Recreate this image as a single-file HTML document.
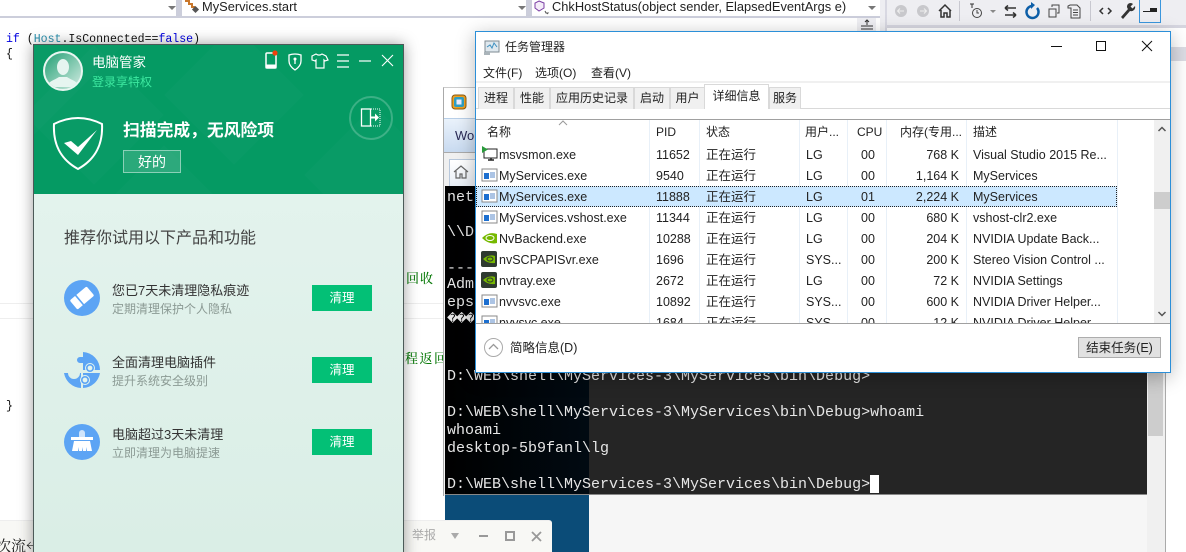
<!DOCTYPE html>
<html><head><meta charset="utf-8">
<style>
*{box-sizing:border-box}
html,body{margin:0;padding:0;width:1186px;height:552px;overflow:hidden;background:#fff}
#w{width:1186px;height:552px;overflow:hidden;position:relative;background:#fff;font-family:"Liberation Sans","Noto Sans CJK SC",sans-serif;font-size:12px;color:#222}
.a{position:absolute;white-space:nowrap}
.mono{font-family:"Liberation Mono","Noto Sans CJK SC",monospace;font-size:11.55px;line-height:14px;color:#111}
.term{font-family:"Liberation Mono",monospace;font-size:15px;line-height:18px;color:#e6e6e6;height:18px}
.green{font-family:"Noto Serif CJK SC",serif;color:#0a7a0a;font-size:13px;line-height:16px;font-weight:500}
.row{position:absolute;left:0;width:640px;height:21px;line-height:20px;font-size:12.5px;color:#222}
.row span{position:absolute;top:1px;white-space:nowrap}
.n{left:23px}.p{left:180px}.s{left:230px}.u{left:330px}.c{left:385px}.m{left:410px;width:73px;text-align:right}.d{left:497px}
.row svg{position:absolute;left:5px;top:2px}
.hd{position:absolute;top:0;font-size:12px;line-height:24px;white-space:nowrap}
.vl{position:absolute;top:0;width:1px;height:203px;background:#e8f0f8}
.tab{position:absolute;top:87px;height:22px;background:#f0f0f0;border:1px solid #d9d9d9;border-bottom:0;text-align:center;line-height:21px;font-size:12px;color:#222}
.btn{position:absolute;left:312px;width:60px;height:26px;background:#03c076;color:#fff;text-align:center;line-height:26px;font-size:12.5px}
.t1{position:absolute;left:112px;font-size:13px;line-height:18px;color:#333;white-space:nowrap}
.t2{position:absolute;left:112px;font-size:12px;line-height:16px;color:#8b9a94;white-space:nowrap}
</style></head><body><div id="w">

<!-- IDE top toolbar -->
<div class="a" style="left:0;top:0;width:887px;height:16px;background:#fff"></div>
<div class="a" style="left:0;top:16px;width:887px;height:2px;background:#ccceDB"></div>
<div class="a" style="left:176px;top:0;width:6px;height:16px;background:#ccceDB"></div>
<div class="a" style="left:526px;top:0;width:6px;height:16px;background:#ccceDB"></div>
<div class="a" style="left:168px;top:6px;width:0;height:0;border:4px solid transparent;border-top:4px solid #777"></div>
<div class="a" style="left:518px;top:6px;width:0;height:0;border:4px solid transparent;border-top:4px solid #777"></div>
<div class="a" style="left:868px;top:6px;width:0;height:0;border:4px solid transparent;border-top:4px solid #777"></div>
<svg class="a" style="left:184px;top:0" width="16" height="14"><path d="M1 1h4v3h3v3h3" stroke="#c9772c" stroke-width="2" fill="none"/><rect x="9" y="7" width="5" height="5" fill="#555" transform="rotate(45 11.5 9.5)"/></svg>
<div class="a" style="left:202px;top:-1px;font-size:12.85px;line-height:16px;color:#222">MyServices.start</div>
<svg class="a" style="left:534px;top:0" width="16" height="15"><path d="M5 1l5 2v5l-5 3-4-3V3z" fill="#f4ecf8" stroke="#7b3fa5"/><path d="M11 11l1 2 2 0-1 1" stroke="#555" fill="none"/></svg>
<div class="a" style="left:552px;top:-1px;font-size:12.85px;line-height:16px;color:#222">ChkHostStatus(object sender, ElapsedEventArgs e)</div>
<div class="a" style="left:0;top:18px;width:887px;height:13px;background:#fff"></div>
<div class="a" style="left:857px;top:18px;width:19px;height:14px;background:#eeeef2"></div>
<svg class="a" style="left:860px;top:19px" width="14" height="13"><path d="M1 7h12M1 10h12M7 1v5M5 3l2-2 2 2" stroke="#333" fill="none"/></svg>

<!-- right toolbar -->
<div class="a" style="left:880px;top:0;width:306px;height:31px;background:#eeeef2"></div>
<div class="a" style="left:885px;top:0;width:2px;height:60px;background:#d8d8e2"></div>
<div class="a" style="left:887px;top:25px;width:299px;height:3px;background:#d6d6e0"></div>
<div class="a" style="left:887px;top:28px;width:299px;height:20px;background:#fff"></div>
<div class="a" style="left:1171px;top:47px;width:15px;height:14px;background:#dcdce4"></div>
<svg class="a" style="left:890px;top:0" width="270" height="24">
<circle cx="11" cy="11" r="6" fill="#c8c8cc"/><path d="M14 11H8M10 8.500l-2.500 2.500 2.500 2.500" stroke="#eee" fill="none"/>
<circle cx="33" cy="11" r="6" fill="#c8c8cc"/><path d="M30 11h6M34 8.500l2.500 2.500-2.500 2.500" stroke="#eee" fill="none"/>
<path d="M49 11l6-6 6 6M51 10v7h3v-4h3v4h3v-7" fill="none" stroke="#333" stroke-width="1.500"/>
<path d="M80 4h4M82 4v4" stroke="#333"/><circle cx="87" cy="13" r="4.500" fill="none" stroke="#444"/><path d="M87 10v3h2" stroke="#444" fill="none"/>
<path d="M100 10h6l-3 3z" fill="#888"/>
<path d="M115 8h11M115 8l3-2.500M115 8l3 2.500M126 15h-11M126 15l-3-2.500M126 15l-3 2.500" stroke="#333" stroke-width="1.500" fill="none"/>
<path d="M142 6a6 6 0 1 0 5 2" stroke="#0e5fa8" stroke-width="2.500" fill="none"/><path d="M141 2v7l4-4z" fill="#0e5fa8"/>
<rect x="159" y="9" width="7" height="8" fill="none" stroke="#444"/><path d="M162 7V5h7v8h-2" fill="none" stroke="#444"/>
<path d="M180 5h7l3 3v10h-9V8h-3v-2z" fill="none" stroke="#444"/><path d="M183 10h5M183 12.500h5M183 15h5" stroke="#444"/>
<path d="M213 8l-3 3 3 3M218 8l3 3-3 3" fill="none" stroke="#333" stroke-width="1.500"/>
<path d="M231 17l7-8a3.500 3.500 0 0 1 5-5l-2.500 2.500 2 2 2.500-2.500a4 4 0 0 1-5 5l-7 8z" fill="#333"/>
</svg>
<div class="a" style="left:959px;top:1px;width:1px;height:20px;background:#c8c8d0"></div>
<div class="a" style="left:1090px;top:1px;width:1px;height:20px;background:#c8c8d0"></div>
<div class="a" style="left:1139px;top:-2px;width:22px;height:25px;border:1px solid #3a96dd"></div>
<div class="a" style="left:1143px;top:11px;width:8px;height:1px;background:#222"></div>
<div class="a" style="left:1150px;top:8px;width:7px;height:4px;background:#222"></div>

<!-- code -->
<div class="a mono" style="left:6px;top:33px"><span style="color:#0000e0">if</span> (<span style="color:#2b91af">Host</span>.IsConnected==<span style="color:#0000e0">false</span>)</div>
<div class="a mono" style="left:6px;top:48px">{</div>
<div class="a mono" style="left:6px;top:400px">}</div>
<div class="a" style="left:0;top:303px;width:444px;height:1px;background:#eee"></div>
<div class="a" style="left:0;top:318px;width:444px;height:1px;background:#eee"></div>
<div class="a green" style="left:406px;top:270px;letter-spacing:1px">回收</div>
<div class="a green" style="left:405px;top:350px;letter-spacing:1.500px">程返回</div>

<!-- console behind -->
<div class="a" style="left:443px;top:87px;width:722px;height:409px;background:#f4f4f4;border-left:1px solid #aaa;border-top:1px solid #ccc"></div>
<div class="a" style="left:444px;top:88px;width:40px;height:30px;background:#fff"></div>
<svg class="a" style="left:451px;top:94px" width="17" height="17"><rect x="1" y="1" width="14" height="14" rx="3" fill="#f0a020" stroke="#8a5a10"/><rect x="3" y="3" width="10" height="10" rx="2" fill="#2f9fc4"/><rect x="5.500" y="5.500" width="5" height="5" fill="#eef"/></svg>
<div class="a" style="left:444px;top:118px;width:40px;height:34px;background:linear-gradient(#eaf2fb,#c8daf0);border-top:1px solid #b8cfe8;font-size:13px;line-height:34px;padding-left:11px;color:#2a2a55">Wo</div>
<div class="a" style="left:444px;top:152px;width:34px;height:34px;background:#f0f0f0;border-top:1px solid #aaa"></div>
<div class="a" style="left:449px;top:159px;width:30px;height:27px;background:linear-gradient(#fff,#e8eef6);border:1px solid #b8c8dc;border-bottom:0"></div>
<svg class="a" style="left:453px;top:164px" width="16" height="16"><path d="M1 8l7-6 7 6M3 7v7h4v-4h2v4h4V7" fill="none" stroke="#666" stroke-width="1.200"/></svg>

<div class="a" style="left:445px;top:186px;width:144px;height:308px;background:linear-gradient(90deg,#000 0,#010a12 100%)"></div>
<div class="a" style="left:589px;top:186px;width:558px;height:308px;background:#252525"></div>
<div class="a" style="left:445px;top:494px;width:702px;height:1px;background:#888"></div>
<div class="a" style="left:445px;top:495px;width:144px;height:57px;background:#0b4c78"></div>
<div class="a" style="left:589px;top:495px;width:558px;height:57px;background:#f6f6f6"></div>
<div class="a" style="left:1147px;top:370px;width:18px;height:182px;background:#f0f0f0"></div>
<div class="a" style="left:1148px;top:370px;width:15px;height:66px;background:#cdcdcd"></div>
<div class="a" style="left:1165px;top:370px;width:1px;height:182px;background:#aaa"></div>

<div class="a term" style="left:447px;top:189px">net</div>
<div class="a term" style="left:447px;top:224px">\\D</div>
<div class="a term" style="left:447px;top:260px">---</div>
<div class="a term" style="left:447px;top:276px">Adm</div>
<div class="a term" style="left:447px;top:294px">eps</div>
<div class="a" style="left:447px;top:312px;width:27px;height:16px;overflow:hidden;font:11px/16px 'Liberation Mono','DejaVu Sans',monospace;color:#e6e6e6"><span style="display:inline-block;width:9px">�</span><span style="display:inline-block;width:9px">�</span><span style="display:inline-block;width:9px">�</span></div>
<div class="a term" style="left:447px;top:368px">D:\WEB\shell\MyServices-3\MyServices\bin\Debug&gt;</div>
<div class="a term" style="left:447px;top:404px">D:\WEB\shell\MyServices-3\MyServices\bin\Debug&gt;whoami</div>
<div class="a term" style="left:447px;top:422px">whoami</div>
<div class="a term" style="left:447px;top:440px">desktop-5b9fanl\lg</div>
<div class="a term" style="left:447px;top:476px">D:\WEB\shell\MyServices-3\MyServices\bin\Debug&gt;</div>
<div class="a" style="left:870px;top:475px;width:9px;height:18px;background:#fff"></div>

<!-- bottom bar -->
<div class="a" style="left:0;top:520px;width:552px;height:32px;background:#f8f8f5;border-top:1px solid #eee;border-radius:0 3px 0 0"></div>
<div class="a" style="left:-4px;top:536px;font-size:15px;line-height:20px;color:#222;font-family:'Noto Serif CJK SC',serif">次流←</div>
<div class="a" style="left:412px;top:527px;font-size:12px;line-height:16px;color:#aaa">举报</div>
<div class="a" style="left:451px;top:533px;width:0;height:0;border:4px solid transparent;border-top:6px solid #aaa"></div>
<div class="a" style="left:479px;top:535px;width:9px;height:2px;background:#999"></div>
<div class="a" style="left:505px;top:531px;width:10px;height:10px;border:2px solid #999"></div>
<svg class="a" style="left:531px;top:531px" width="11" height="11"><path d="M1 1l9 9M10 1l-9 9" stroke="#999" stroke-width="1.800"/></svg>

<!-- QQ manager window -->
<div class="a" style="left:33px;top:44px;width:371px;height:520px;border:1px solid #4c5a58;box-shadow:0 0 14px rgba(0,0,0,.38);background:linear-gradient(#e7f5f0,#daeee6 98%)">
<div style="position:absolute;left:0;top:0;width:369px;height:149px;background:#059a63;overflow:hidden">
<svg width="369" height="149" style="position:absolute;left:0;top:0"><g fill="#fff" fill-opacity=".018"><path d="M0 0h90L0 90z"/><path d="M60 0l70 70-70 70-70-70z"/><path d="M200 -20l70 70-70 70-70-70z"/><path d="M340 60l70 70-70 70-70-70z"/><path d="M130 100l60 60-120 0z"/></g></svg>
</div>
</div>
<!-- avatar -->
<svg class="a" style="left:42px;top:50px" width="42" height="42"><defs><linearGradient id="av" x1="0" y1="0" x2="1" y2="1"><stop offset="0" stop-color="#1f9e72"/><stop offset="1" stop-color="#d8eee6"/></linearGradient><clipPath id="cp"><circle cx="21" cy="21" r="18"/></clipPath></defs><circle cx="21" cy="21" r="19" fill="url(#av)" stroke="#e8f6f1" stroke-width="2"/><g clip-path="url(#cp)"><ellipse cx="21" cy="17" rx="6" ry="8" fill="#e6f5f0"/><path d="M5 37c1-6 8-7 12-10h8c4 3 11 4 12 10z" fill="#e6f5f0"/></g></svg>
<div class="a" style="left:92px;top:54px;font-size:13.500px;line-height:18px;color:#fff">电脑管家</div>
<div class="a" style="left:92px;top:74px;font-size:12px;line-height:16px;color:#3de8a0">登录享特权</div>
<!-- top icons -->
<svg class="a" style="left:260px;top:48px" width="140" height="24" fill="none" stroke="#fff">
<rect x="6" y="5" width="10" height="15" rx="1" stroke-width="1.500"/><rect x="6" y="17" width="10" height="3" fill="#fff"/><circle cx="15" cy="5" r="2.600" fill="#f0400c" stroke="none"/>
<path d="M29 7q6-2 12 0v6q0 5-6 9-6-4-6-9z" stroke-width="1.300"/><circle cx="35" cy="11" r="1.500" fill="#fff" stroke="none"/><path d="M35 12v4" stroke-width="1.300"/>
<path d="M52 8l4-2 2 1h2l2-1 4 2 2 4-3 1-1-1v8H56v-8l-1 1-3-1z" stroke-width="1.200" transform="translate(0 0)"/>
<path d="M77 7h12M77 13h12M77 19h12" stroke-width="1.200"/>
<path d="M99 13h12" stroke-width="1.200"/>
<path d="M122 7l11 11M133 7l-11 11" stroke-width="1.100"/>
</svg>
<!-- shield -->
<svg class="a" style="left:52px;top:114px" width="54" height="60" fill="none"><path d="M2 10Q26-2 50 10C51 30 44 45 26 55 8 45 1 30 2 10z" stroke="#fff" stroke-width="2"/><path d="M12 29l7-2 7 6 19-17-19 25z" fill="#fff"/></svg>
<div class="a" style="left:123px;top:120px;font-size:16.800px;line-height:22px;font-weight:bold;color:#fff">扫描完成，无风险项</div>
<div class="a" style="left:123px;top:150px;width:58px;height:23px;border:1px solid rgba(255,255,255,.45);background:rgba(255,255,255,.15);color:#fff;font-size:14px;line-height:22px;text-align:center">好的</div>
<svg class="a" style="left:349px;top:96px" width="44" height="44" fill="none"><circle cx="22" cy="22" r="21" stroke="#fff" stroke-opacity=".22" stroke-width="2"/><rect x="12.500" y="13" width="9" height="17" stroke="#fff" stroke-width="1.300"/><path d="M22 13h9v17h-9" stroke="#fff" stroke-dasharray="1 1"/><path d="M21 21.500h6" stroke="#fff" stroke-width="2"/><path d="M26 17.500l4 4-4 4z" fill="#fff"/></svg>

<div class="a" style="left:64px;top:228px;font-size:16px;line-height:22px;color:#444">推荐你试用以下产品和功能</div>

<svg class="a" style="left:64px;top:280px" width="36" height="36"><circle cx="18" cy="18" r="18" fill="#5ca4f4"/><g transform="rotate(-40 18 18)"><rect x="7" y="12" width="22" height="12" rx="1.500" fill="#fff"/><rect x="14" y="11" width="1.600" height="14" fill="#5ca4f4"/></g></svg>
<div class="t1" style="top:282px">您已7天未清理隐私痕迹</div>
<div class="t2" style="top:301px">定期清理保护个人隐私</div>
<div class="btn" style="top:285px">清理</div>

<svg class="a" style="left:64px;top:352px" width="36" height="36"><g fill="#5ca4f4"><path d="M19 0A18 18 0 0 1 36 18H19V11h-3a3 3 0 0 1 0-6h3z"/><path d="M0 21h4a6 6 0 0 0 12 0h1v15A18 18 0 0 1 0 21z"/><path d="M19 21h17A18 18 0 0 1 19 36z"/></g><circle cx="26" cy="16" r="5" fill="#e4f4ee"/><circle cx="26" cy="16" r="3.200" fill="none" stroke="#5ca4f4" stroke-width="1.600"/><circle cx="21" cy="28" r="5" fill="#e4f4ee"/><circle cx="21" cy="28" r="3.200" fill="none" stroke="#5ca4f4" stroke-width="1.600"/></svg>
<div class="t1" style="top:354px">全面清理电脑插件</div>
<div class="t2" style="top:373px">提升系统安全级别</div>
<div class="btn" style="top:357px">清理</div>

<svg class="a" style="left:64px;top:424px" width="36" height="36"><circle cx="18" cy="18" r="18" fill="#5ca4f4"/><path d="M15 13V9a3 3 0 0 1 6 0v4z" fill="#cfe4fb"/><rect x="7" y="13" width="22" height="3" fill="#fff"/><path d="M10 17h16l2 10h-5v-4l-1 4h-3v-4l-1 4h-3v-4l-1 4H8z" fill="#fff"/></svg>
<div class="t1" style="top:426px">电脑超过3天未清理</div>
<div class="t2" style="top:445px">立即清理为电脑提速</div>
<div class="btn" style="top:429px">清理</div>

<!-- Task manager -->
<div class="a" style="left:475px;top:31px;width:696px;height:342px;background:#fff;border:1px solid #2b8fd8;box-shadow:0 4px 18px rgba(0,0,0,.28)"></div>
<svg class="a" style="left:483px;top:38px" width="18" height="18"><rect x="2" y="3" width="14" height="11" fill="#dfe8ee" stroke="#7d8a92"/><path d="M4 9l3-2 2 3 2-5 3 4" stroke="#3c8fc0" fill="none"/><rect x="1" y="14" width="6" height="3" fill="#aab4ba"/></svg>
<div class="a" style="left:505px;top:38px;font-size:12px;line-height:18px;color:#222">任务管理器</div>
<div class="a" style="left:1051px;top:46px;width:11px;height:1px;background:#111"></div>
<div class="a" style="left:1096px;top:41px;width:10px;height:10px;border:1px solid #111"></div>
<svg class="a" style="left:1141px;top:40px" width="12" height="12"><path d="M1 1l10 10M11 1L1 11" stroke="#111" fill="none"/></svg>
<div class="a" style="left:483px;top:65px;font-size:12px;line-height:16px">文件(F)</div>
<div class="a" style="left:535px;top:65px;font-size:12px;line-height:16px">选项(O)</div>
<div class="a" style="left:591px;top:65px;font-size:12px;line-height:16px">查看(V)</div>
<div class="a" style="left:476px;top:81px;width:694px;height:2px;background:#f0f0f0"></div>
<div class="a" style="left:476px;top:108px;width:694px;height:1px;background:#d9d9d9"></div>
<div class="tab" style="left:478px;width:36px">进程</div>
<div class="tab" style="left:514px;width:36px">性能</div>
<div class="tab" style="left:550px;width:84px">应用历史记录</div>
<div class="tab" style="left:634px;width:36px">启动</div>
<div class="tab" style="left:670px;width:35px">用户</div>
<div class="tab" style="left:704px;top:84px;width:65px;height:25px;background:#fff;line-height:22px;z-index:2">详细信息</div>
<div class="tab" style="left:769px;width:32px">服务</div>
<div class="a" style="left:476px;top:119px;width:694px;height:1px;background:#a0a0a0"></div>

<!-- table -->
<div class="a" style="left:476px;top:120px;width:678px;height:203px;overflow:hidden;background:#fff">
 <svg style="position:absolute;left:82px;top:0" width="10" height="6"><path d="M1 5l4-4 4 4" stroke="#999" fill="none"/></svg>
 <div class="vl" style="left:173px"></div><div class="vl" style="left:223px"></div><div class="vl" style="left:323px"></div><div class="vl" style="left:371px"></div><div class="vl" style="left:410px"></div><div class="vl" style="left:490px"></div><div class="vl" style="left:641px"></div>
 <div class="hd" style="left:11px">名称</div><div class="hd" style="left:180px">PID</div><div class="hd" style="left:230px">状态</div><div class="hd" style="left:329px">用户...</div><div class="hd" style="left:381px">CPU</div><div class="hd" style="left:424px">内存(专用...</div><div class="hd" style="left:497px">描述</div>

 <div class="row" style="top:24px"><svg width="18" height="17"><rect x="3" y="3" width="13" height="9" fill="#fff" stroke="#222"/><path d="M7 14h6M10 12v2" stroke="#222" stroke-width="1.500"/><path d="M1 0v7l6-3.500z" fill="#2a9a3c"/></svg><span class="n">msvsmon.exe</span><span class="p">11652</span><span class="s">正在运行</span><span class="u">LG</span><span class="c">00</span><span class="m">768 K</span><span class="d">Visual Studio 2015 Re...</span></div>
 <div class="row" style="top:45px"><svg width="18" height="17"><rect x="1" y="2" width="15" height="12" fill="#fff" stroke="#888"/><rect x="3" y="6" width="5" height="6" fill="#1c6fd0"/><path d="M9 6h5M9 8h5M9 10h5" stroke="#5a8ac8"/></svg><span class="n">MyServices.exe</span><span class="p">9540</span><span class="s">正在运行</span><span class="u">LG</span><span class="c">00</span><span class="m">1,164 K</span><span class="d">MyServices</span></div>
 <div class="row" style="top:66px;width:641px;background:#cce8ff;outline:1px dotted #222;outline-offset:-1px"><svg width="18" height="17"><rect x="1" y="2" width="15" height="12" fill="#fff" stroke="#888"/><rect x="3" y="6" width="5" height="6" fill="#1c6fd0"/><path d="M9 6h5M9 8h5M9 10h5" stroke="#5a8ac8"/></svg><span class="n">MyServices.exe</span><span class="p">11888</span><span class="s">正在运行</span><span class="u">LG</span><span class="c">01</span><span class="m">2,224 K</span><span class="d">MyServices</span></div>
 <div class="row" style="top:87px"><svg width="18" height="17"><rect x="1" y="2" width="15" height="12" fill="#fff" stroke="#888"/><rect x="3" y="6" width="5" height="6" fill="#1c6fd0"/><path d="M9 6h5M9 8h5M9 10h5" stroke="#5a8ac8"/></svg><span class="n">MyServices.vshost.exe</span><span class="p">11344</span><span class="s">正在运行</span><span class="u">LG</span><span class="c">00</span><span class="m">680 K</span><span class="d">vshost-clr2.exe</span></div>
 <div class="row" style="top:108px"><svg width="18" height="17"><path d="M1 8q7-7 15-4v9Q8 15 1 8z" fill="#76b900"/><ellipse cx="9" cy="8" rx="4" ry="2.500" fill="none" stroke="#fff"/></svg><span class="n">NvBackend.exe</span><span class="p">10288</span><span class="s">正在运行</span><span class="u">LG</span><span class="c">00</span><span class="m">204 K</span><span class="d">NVIDIA Update Back...</span></div>
 <div class="row" style="top:129px"><svg width="18" height="17"><rect x="0" y="0" width="16" height="16" rx="2" fill="#2e3a30"/><path d="M2 8q6-5 12-3v7Q7 13 2 8z" fill="#76b900"/><ellipse cx="9" cy="8" rx="3" ry="2" fill="none" stroke="#2e3a30"/></svg><span class="n">nvSCPAPISvr.exe</span><span class="p">1696</span><span class="s">正在运行</span><span class="u">SYS...</span><span class="c">00</span><span class="m">200 K</span><span class="d">Stereo Vision Control ...</span></div>
 <div class="row" style="top:150px"><svg width="18" height="17"><rect x="0" y="0" width="16" height="16" rx="2" fill="#2e3a30"/><path d="M2 8q6-5 12-3v7Q7 13 2 8z" fill="#76b900"/><ellipse cx="9" cy="8" rx="3" ry="2" fill="none" stroke="#2e3a30"/></svg><span class="n">nvtray.exe</span><span class="p">2672</span><span class="s">正在运行</span><span class="u">LG</span><span class="c">00</span><span class="m">72 K</span><span class="d">NVIDIA Settings</span></div>
 <div class="row" style="top:171px"><svg width="18" height="17"><rect x="1" y="2" width="15" height="12" fill="#fff" stroke="#888"/><rect x="3" y="6" width="5" height="6" fill="#1c6fd0"/><path d="M9 6h5M9 8h5M9 10h5" stroke="#5a8ac8"/></svg><span class="n">nvvsvc.exe</span><span class="p">10892</span><span class="s">正在运行</span><span class="u">SYS...</span><span class="c">00</span><span class="m">600 K</span><span class="d">NVIDIA Driver Helper...</span></div>
 <div class="row" style="top:192px"><svg width="18" height="17"><rect x="1" y="2" width="15" height="12" fill="#fff" stroke="#888"/><rect x="3" y="6" width="5" height="6" fill="#1c6fd0"/><path d="M9 6h5M9 8h5M9 10h5" stroke="#5a8ac8"/></svg><span class="n">nvvsvc.exe</span><span class="p">1684</span><span class="s">正在运行</span><span class="u">SYS...</span><span class="c">00</span><span class="m">12 K</span><span class="d">NVIDIA Driver Helper...</span></div>
</div>
<!-- scrollbar -->
<div class="a" style="left:1154px;top:120px;width:16px;height:203px;background:#f0f0f0"></div>
<div class="a" style="left:1154px;top:192px;width:16px;height:17px;background:#cdcdcd"></div>
<svg class="a" style="left:1154px;top:120px" width="16" height="203" fill="none" stroke="#555" stroke-width="1.500"><path d="M4.500 11l3.500-3.500 3.500 3.500M4.500 192l3.500 3.500 3.500-3.500"/></svg>
<div class="a" style="left:476px;top:323px;width:694px;height:1px;background:#a0a0a0"></div>
<svg class="a" style="left:483px;top:337px" width="21" height="21" fill="none"><circle cx="10.500" cy="10.500" r="9" stroke="#aaa"/><path d="M6 12l4.500-4.500 4.500 4.500" stroke="#999" stroke-width="1.300"/></svg>
<div class="a" style="left:510px;top:340px;font-size:12.500px;line-height:17px;color:#222">简略信息(D)</div>
<div class="a" style="left:1078px;top:337px;width:83px;height:21px;background:#e1e1e1;border:1px solid #adadad;text-align:center;font-size:12.500px;line-height:20px;color:#222">结束任务(E)</div>
</div></body></html>
